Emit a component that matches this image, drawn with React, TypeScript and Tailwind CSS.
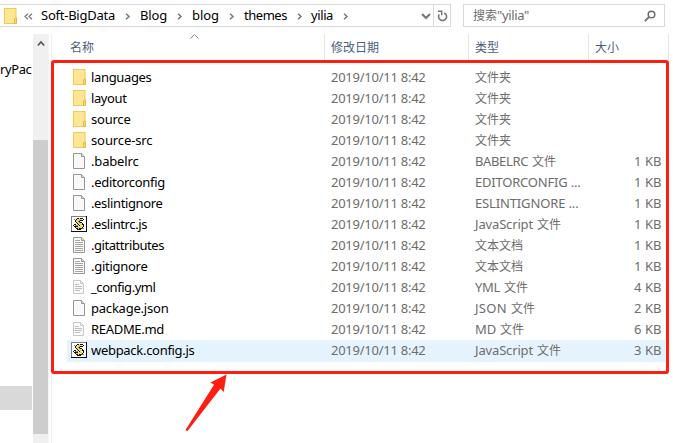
import { useLayoutEffect, useRef } from "react";

/** Latin label whose tracking is adjusted so that it fills the given width. */
function Fit({ text, width, className = "" }: { text: string; width: number; className?: string }) {
  const ref = useRef<HTMLSpanElement>(null);
  useLayoutEffect(() => {
    const el = ref.current;
    if (!el) return;
    el.style.letterSpacing = "0px";
    const natural = el.getBoundingClientRect().width;
    el.style.letterSpacing = `${(width - natural) / text.length}px`;
  }, [text, width]);
  return (
    <span ref={ref} className={`block w-max shrink-0 self-start whitespace-pre text-[13px] ${className}`}>
      {text}
    </span>
  );
}

function Folder() {
  return (
    <svg width="13" height="16" viewBox="0 0 13 16" className="block">
      <rect x="0.5" y="0.5" width="11.5" height="15" fill="#ffe694" stroke="#eecb57" />
      <path d="M10.5 15.5v-4.5l1-1h1v5.5z" fill="#f9dc79" stroke="#e3ba43" />
    </svg>
  );
}

function Page({ lined = false }: { lined?: boolean }) {
  return (
    <svg width="13" height="16" viewBox="0 0 13 16" className="block">
      <path d="M0.5 0.5h8l3 3v12h-11z" fill="#f9f9f9" stroke="#969696" />
      <path d="M8.5 0.5v3h3" fill="#ddd" stroke="#969696" />
      {lined && <path d="M2 3.5h5M2 5.5h8M2 7.5h8M2 9.5h8M2 11.5h8M2 13.5h8" stroke="#a4a4a4" />}
    </svg>
  );
}

function Note() {
  return (
    <svg width="12" height="14" viewBox="0 0 12 14" className="block">
      <path d="M0.5 0.5h7l3 3v10h-10z" fill="#fafafa" stroke="#c9c9c9" />
      <path d="M7.5 0.5v3h3" fill="none" stroke="#c9c9c9" />
      <path d="M2 4.5h4M2 6.5h7M2 8.5h7M2 10.5h5" stroke="#bdbdbd" />
    </svg>
  );
}

function Script() {
  return (
    <svg width="16" height="16" viewBox="0 0 16 16" className="block">
      <rect width="16" height="16" fill="#111" />
      <path d="M0 0h15v1H1v14H0z" fill="#808080" />
      <rect x="1" y="1" width="14" height="14" fill="#fff" />
      <path d="M5 2h6v2l-2 2 2 2 1 3-2 2H5v-2h3L5 8 4 5z" fill="#e8e2a8" />
      <path d="M6 2.5h2M9 2.5h3M5 3.5h1M12 3.5h1M4 4.5h1M9 4.5h3M4 5.5h1M8 5.5h1M5 6.5h1M9 6.5h2M6 7.5h1M11 7.5h1M3 8.5h2M7 8.5h1M11 8.5h2M2 9.5h1M8 9.5h1M12 9.5h1M3 10.5h4M12 10.5h1M4 11.5h1M11 11.5h1M5 12.5h2M8 12.5h3M6 13.5h4" stroke="#111" />
      <path d="M7 3.5h3M5 4.5h2M6 6.5h2M8 7.5h2M9 8.5h2M9 10.5h2M6 11.5h3" stroke="#e9d91c" />
      <path d="M8 4.5h1M7 5.5h1M8 6.5h1M4 9.5h3M11 12.5h2M3 3.5h1" stroke="#808080" />
    </svg>
  );
}

type Kind = "folder" | "page" | "text" | "note" | "script";
type Row = { kind: Kind; name: string; w: number; latin?: string; lw?: number; cjk?: string; size?: string };

const rows: Row[] = [
  { kind: "folder", name: "languages", w: 60.5, cjk: "文件夹" },
  { kind: "folder", name: "layout", w: 35.5, cjk: "文件夹" },
  { kind: "folder", name: "source", w: 39.5, cjk: "文件夹" },
  { kind: "folder", name: "source-src", w: 61.5, cjk: "文件夹" },
  { kind: "page", name: ".babelrc", w: 47.5, latin: "BABELRC", lw: 53, cjk: "文件", size: "1 KB" },
  { kind: "page", name: ".editorconfig", w: 74, latin: "EDITORCONFIG ...", lw: 105.5, size: "1 KB" },
  { kind: "page", name: ".eslintignore", w: 71.5, latin: "ESLINTIGNORE ...", lw: 103.5, size: "1 KB" },
  { kind: "script", name: ".eslintrc.js", w: 56, latin: "JavaScript", lw: 58, cjk: "文件", size: "1 KB" },
  { kind: "text", name: ".gitattributes", w: 73, cjk: "文本文档", size: "1 KB" },
  { kind: "text", name: ".gitignore", w: 56.5, cjk: "文本文档", size: "1 KB" },
  { kind: "note", name: "_config.yml", w: 64.5, latin: "YML", lw: 25, cjk: "文件", size: "4 KB" },
  { kind: "page", name: "package.json", w: 77.5, latin: "JSON", lw: 32, cjk: "文件", size: "2 KB" },
  { kind: "note", name: "README.md", w: 73, latin: "MD", lw: 21, cjk: "文件", size: "6 KB" },
  { kind: "script", name: "webpack.config.js", w: 103.5, latin: "JavaScript", lw: 58, cjk: "文件", size: "3 KB" },
];

function Icon({ kind }: { kind: Kind }) {
  if (kind === "script") return <div className="pl-1 pt-0.5"><Script /></div>;
  if (kind === "note") return <div className="pl-1.5 pt-[3px]"><Note /></div>;
  return (
    <div className="pl-1.5 pt-0.5">
      {kind === "folder" ? <Folder /> : <Page lined={kind === "text"} />}
    </div>
  );
}

function FileRow({ row, active }: { row: Row; active: boolean }) {
  return (
    <div className={`flex w-[598px] leading-[21px] ${active ? "h-[22px] bg-[#e5f3ff]" : "h-[21px]"}`}>
      <div className="w-6 shrink-0"><Icon kind={row.kind} /></div>
      <div className="w-60 shrink-0 text-black"><Fit text={row.name} width={row.w} /></div>
      <div className="w-36 shrink-0 text-[#6d6d6d]"><Fit text="2019/10/11 8:42" width={94.5} /></div>
      <div className="flex w-[120px] shrink-0 gap-1 text-[#6d6d6d]">
        {row.latin && <Fit text={row.latin} width={row.lw ?? 0} />}
        {row.cjk && <span className="text-xs leading-[21px]">{row.cjk}</span>}
      </div>
      <div className="flex grow justify-end pr-[3.5px] text-[#6d6d6d]">
        {row.size && <Fit text={row.size} width={27.5} />}
      </div>
    </div>
  );
}

function Crumb({ text, width, gap }: { text: string; width: number; gap: string }) {
  return (
    <div className={`flex h-[21px] shrink-0 items-center ${gap}`}>
      <Fit text={text} width={width} className="leading-[20px]" />
      <svg width="6" height="7" viewBox="0 0 6 7" className="mt-px">
        <path d="M1 0.8l3 2.7-3 2.7" fill="none" stroke="#777" strokeWidth="1.5" />
      </svg>
    </div>
  );
}

function TopBar() {
  return (
    <div className="flex h-[34px] pt-1">
      <div className="flex h-[23px] w-[451px] border border-l-0 border-[#d9d9d9]">
        <div className="flex w-[433px] items-center">
          <div className="ml-1 shrink-0"><Folder /></div>
          <svg width="9" height="7" viewBox="0 0 9 7" className="ml-[7px] mr-2 mt-px shrink-0">
            <path d="M4 0.8l-3 2.7 3 2.7M8 0.8l-3 2.7 3 2.7" fill="none" stroke="#777" strokeWidth="1.2" />
          </svg>
          <Crumb text="Soft-BigData" width={74} gap="gap-[10px] mr-[9px]" />
          <Crumb text="Blog" width={27} gap="gap-[10px] mr-[9px]" />
          <Crumb text="blog" width={27} gap="gap-[10px] mr-[9px]" />
          <Crumb text="themes" width={43} gap="gap-[10px] mr-[8px]" />
          <Crumb text="yilia" width={22} gap="gap-[10px]" />
          <svg width="10" height="7" viewBox="0 0 10 7" className="ml-auto mr-[2px] mt-px">
            <path d="M1 1l4 4 4-4" fill="none" stroke="#777" strokeWidth="2" />
          </svg>
        </div>
        <div className="flex grow items-center justify-center border-l border-[#d9d9d9]">
          <svg width="11" height="12" viewBox="0 0 11 12">
            <path d="M2.2 4.4A4 4 0 1 0 7.2 2.9" fill="none" stroke="#777" strokeWidth="1.6" />
            <path d="M1 1.3h3.7v4" fill="none" stroke="#777" strokeWidth="1.5" />
          </svg>
        </div>
      </div>
      <div className="ml-3 flex h-[23px] w-[202px] items-center border border-[#d9d9d9] pl-[9px] text-[#6d6d6d]">
        <span className="text-xs">搜索</span>
        <Fit text={'"yilia"'} width={32} className="leading-[20px]" />
        <svg width="12" height="12" viewBox="0 0 12 12" className="ml-auto mr-2">
          <circle cx="7.5" cy="4.5" r="3.3" fill="none" stroke="#6d6d6d" strokeWidth="1.5" />
          <path d="M5.2 6.8L0.8 11.2" stroke="#6d6d6d" strokeWidth="1.8" />
        </svg>
      </div>
    </div>
  );
}

function Sidebar() {
  return (
    <div className="flex w-[51px] shrink-0">
      <div className="w-[33px] overflow-hidden">
        <div className="mt-[25px] h-[21px] w-8 overflow-hidden text-black"><Fit text="ryPack" width={38} className="leading-[21px]" /></div>
        <div className="mt-[306px] h-6 w-8 bg-[#d9d9d9]" />
      </div>
      <div className="w-4 border-r border-[#f3f3f3] bg-[#f0f0f0]">
        <div className="h-[106px] pl-1 pt-[6px]">
          <svg width="8" height="7" viewBox="0 0 8 7" className="block">
            <path d="M0.8 5.5l3.2-3.5 3.2 3.5" fill="none" stroke="#555" strokeWidth="1.7" />
          </svg>
        </div>
        <div className="h-[294px] bg-[#cdcdcd]" />
      </div>
    </div>
  );
}

function ColumnHeads() {
  return (
    <div className="flex h-[33px] text-xs leading-[28px] text-[#4c607a]">
      <div className="relative h-[26px] w-[273px] border-r border-[#e5e5e5] pl-[18px]">
        名称
        <svg width="9" height="5" viewBox="0 0 9 5" className="absolute left-[138px] top-0">
          <path d="M0.5 4.5l4-4 4 4" fill="none" stroke="#888" />
        </svg>
      </div>
      <div className="h-[26px] w-36 border-r border-[#e5e5e5] pl-[6px]">修改日期</div>
      <div className="h-[26px] w-[120px] border-r border-[#e5e5e5] pl-[6px]">类型</div>
      <div className="h-[26px] w-20 border-r border-[#e5e5e5] pl-[6px]">大小</div>
    </div>
  );
}

export default function App() {
  return (
    <div className="relative h-[443px] w-[673px] overflow-hidden bg-white font-['Noto_Sans','Noto_Sans_CJK_SC',sans-serif]">
      <TopBar />
      <div className="flex h-[409px]">
        <Sidebar />
        <div className="grow border-l border-[#f0f0f0]">
          <ColumnHeads />
          <div className="pl-[15px]">
            {rows.map((row, i) => (
              <FileRow key={row.name} row={row} active={i === rows.length - 1} />
            ))}
          </div>
        </div>
      </div>
      <div className="pointer-events-none absolute left-[51px] top-[60px] h-[314px] w-[618px] rounded-[3px] border-[3px] border-[#ff1e10]" />
      <svg width="44" height="60" viewBox="0 0 44 60" className="absolute left-[184px] top-[373px]">
        <path d="M42.5 1.5L26.5 9.5 30 11.8 1.5 57 3.3 58.2 36.5 15.5 39.7 19z" fill="#ff1e10" />
      </svg>
    </div>
  );
}
